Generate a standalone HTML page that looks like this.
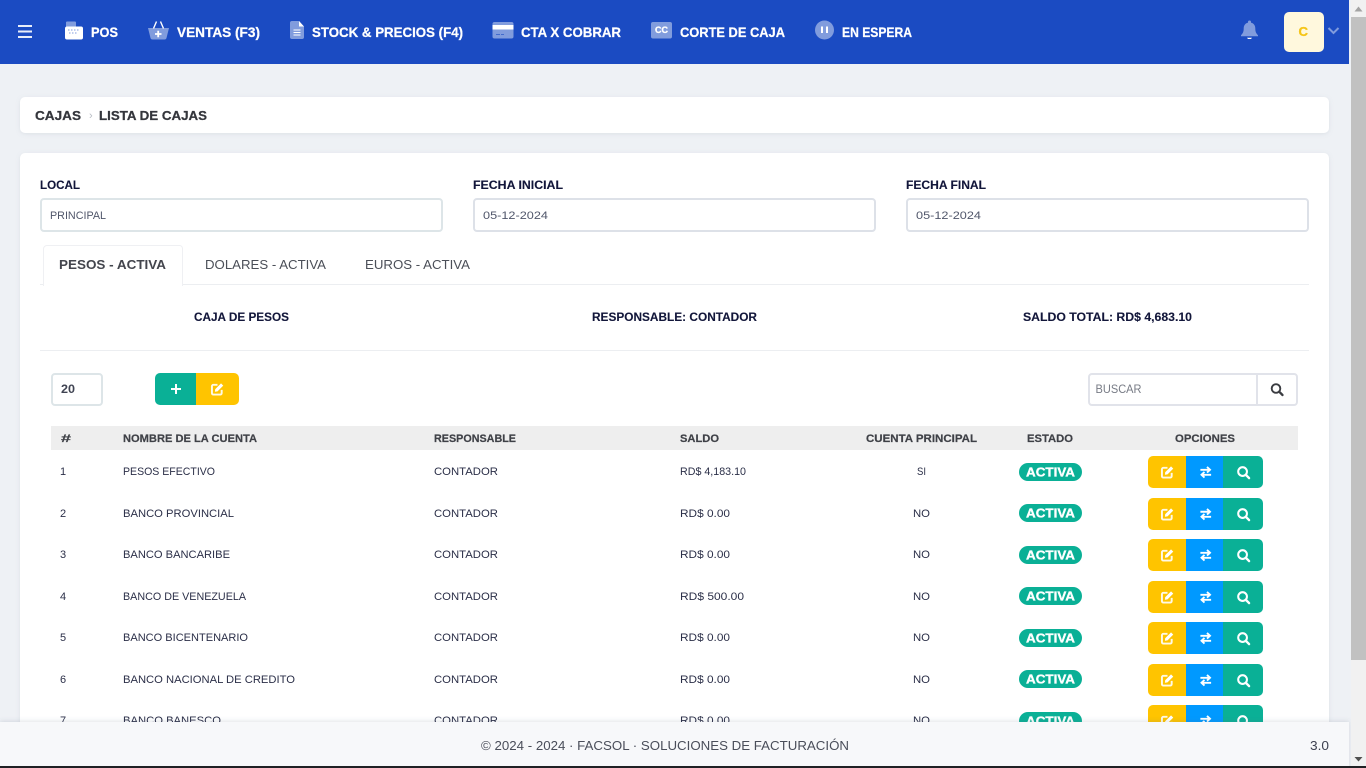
<!DOCTYPE html>
<html lang="es">
<head>
<meta charset="utf-8">
<title>Lista de cajas</title>
<style>
html,body{margin:0;padding:0;width:1366px;height:768px;overflow:hidden;background:#eef1f5}
svg{display:block;position:absolute;left:0;top:0}
text{font-family:"Liberation Sans",sans-serif}
.nav{font-size:14px;font-weight:700;fill:#fff;stroke:#fff;stroke-width:.25px}
.lab{font-size:12px;font-weight:700;fill:#12163a;stroke:#12163a;stroke-width:.12px}
.val{font-size:11px;fill:#50566a}
.tab{font-size:13px;fill:#4b4f58}
.sum{font-size:12px;font-weight:700;fill:#12163a;stroke:#12163a;stroke-width:.12px}
.th{font-size:11px;font-weight:700;fill:#3f4147;stroke:#3f4147;stroke-width:.2px}
.td{font-size:11px;fill:#2b2f48}
.bd{font-size:12.5px;font-weight:700;fill:#fff;stroke:#fff;stroke-width:.35px}
</style>
</head>
<body>
<svg width="1366" height="768" viewBox="0 0 1366 768" xmlns="http://www.w3.org/2000/svg">
<defs>
<filter id="sh" x="-2%" y="-20%" width="104%" height="140%"><feDropShadow dx="0" dy="1" stdDeviation="2" flood-color="#8a94a6" flood-opacity=".18"/></filter>
<filter id="fs" x="-2%" y="-30%" width="104%" height="140%"><feDropShadow dx="0" dy="-1" stdDeviation="2" flood-color="#5a6478" flood-opacity=".18"/></filter>
<symbol id="ed" viewBox="0 0 14 14" overflow="visible">
<path d="M11.500 8v3.400a1.600 1.600 0 0 1-1.600 1.600H2.600A1.600 1.600 0 0 1 1 11.400V4.100a1.600 1.600 0 0 1 1.600-1.600h4.400" fill="none" stroke="#fff" stroke-width="2.100" stroke-opacity=".9"/>
<path d="M4.600 7.200 10.800.9l2.400 2.400L7 9.500l-2.800.4z" fill="#fff"/>
</symbol>
<symbol id="ex" viewBox="0 0 14 14" overflow="visible">
<path d="M1 4.200h10M8.400 1l3.400 3.200-3.400 3.200M13 9.800H3M5.600 6.600 2.200 9.800 5.600 13" fill="none" stroke="#fff" stroke-width="2.100"/>
</symbol>
<symbol id="se" viewBox="0 0 14 14" overflow="visible">
<circle cx="6" cy="6" r="4.700" fill="none" stroke="#fff" stroke-width="2.200"/>
<path d="M9.500 9.500l3.500 3.500" stroke="#fff" stroke-width="2.600" stroke-linecap="round"/>
</symbol>
<g id="btns">
<path d="M5 0h33v32H5a5 5 0 0 1-5-5V5a5 5 0 0 1 5-5z" fill="#ffc400"/>
<rect x="38" width="37" height="32" fill="#0099ff"/>
<path d="M75 0h35a5 5 0 0 1 5 5v22a5 5 0 0 1-5 5H75z" fill="#0ab096"/>
<use href="#ed" x="13" y="9.500" width="13" height="13"/>
<use href="#ex" x="51.500" y="10" width="12.500" height="12.500"/>
<use href="#se" x="89" y="10" width="13" height="13"/>
</g>
</defs>

<rect width="1366" height="768" fill="#eef1f5"/>

<!-- Breadcrumb card -->
<rect x="20" y="97" width="1309" height="36" rx="5" fill="#fff" filter="url(#sh)"/>
<text x="35" y="120" font-size="13" font-weight="700" fill="#34363c" stroke="#34363c" stroke-width=".25" textLength="46" lengthAdjust="spacingAndGlyphs">CAJAS</text>
<text x="89" y="119" font-size="11" fill="#b8bcc4">›</text>
<text x="99" y="120" font-size="13" font-weight="700" fill="#34363c" stroke="#34363c" stroke-width=".25" textLength="108" lengthAdjust="spacingAndGlyphs">LISTA DE CAJAS</text>

<!-- Main card -->
<rect x="20" y="153" width="1309" height="640" rx="5" fill="#fff" filter="url(#sh)"/>

<text class="lab" x="40" y="189" textLength="40" lengthAdjust="spacingAndGlyphs">LOCAL</text>
<text class="lab" x="473" y="189" textLength="90" lengthAdjust="spacingAndGlyphs">FECHA INICIAL</text>
<text class="lab" x="906" y="189" textLength="80" lengthAdjust="spacingAndGlyphs">FECHA FINAL</text>

<rect x="41" y="199" width="401" height="32" rx="3" fill="#fff" stroke="#dde5e8" stroke-width="2"/>
<rect x="474" y="199" width="401" height="32" rx="3" fill="#fff" stroke="#dde1e8" stroke-width="2"/>
<rect x="907" y="199" width="401" height="32" rx="3" fill="#fff" stroke="#dde1e8" stroke-width="2"/>
<text class="val" x="50" y="219" textLength="56" lengthAdjust="spacingAndGlyphs">PRINCIPAL</text>
<text class="val" x="483" y="219" textLength="65" lengthAdjust="spacingAndGlyphs">05-12-2024</text>
<text class="val" x="916" y="219" textLength="65" lengthAdjust="spacingAndGlyphs">05-12-2024</text>

<!-- Tabs -->
<path d="M40 284.500H1309" stroke="#eceef1" stroke-width="1"/>
<path d="M43.500 286V249a3.500 3.500 0 0 1 3.500-3.500h132.500a3 3 0 0 1 3 3V286" fill="#fff" stroke="#eff0f3" stroke-width="1"/>
<text class="tab" x="59" y="269" font-weight="700" style="fill:#43454d" textLength="107" lengthAdjust="spacingAndGlyphs">PESOS - ACTIVA</text>
<text class="tab" x="205" y="269" textLength="121" lengthAdjust="spacingAndGlyphs">DOLARES - ACTIVA</text>
<text class="tab" x="365" y="269" textLength="105" lengthAdjust="spacingAndGlyphs">EUROS - ACTIVA</text>

<!-- Summary -->
<text class="sum" x="194" y="321" textLength="95" lengthAdjust="spacingAndGlyphs">CAJA DE PESOS</text>
<text class="sum" x="592" y="321" textLength="165" lengthAdjust="spacingAndGlyphs">RESPONSABLE: CONTADOR</text>
<text class="sum" x="1023" y="321" textLength="169" lengthAdjust="spacingAndGlyphs">SALDO TOTAL: RD$ 4,683.10</text>
<path d="M40 350.500H1309" stroke="#eceef1" stroke-width="1"/>

<!-- Controls -->
<rect x="52" y="374" width="50" height="31" rx="3" fill="#fff" stroke="#dde5e8" stroke-width="2"/>
<text x="61" y="393" font-size="11.500" font-weight="700" fill="#3f4352" textLength="14" lengthAdjust="spacingAndGlyphs">20</text>
<path d="M160 373h36v32h-36a5 5 0 0 1-5-5v-22a5 5 0 0 1 5-5z" fill="#0ab096"/>
<path d="M196 373h38a5 5 0 0 1 5 5v22a5 5 0 0 1-5 5h-38z" fill="#ffc400"/>
<path d="M171 389h10M176 384v10" stroke="#fff" stroke-width="2"/>
<use href="#ed" x="211" y="382.500" width="13" height="13"/>

<rect x="1089" y="374" width="208" height="31" rx="3" fill="#fff" stroke="#e1e3ea" stroke-width="2"/>
<path d="M1257 374v31" stroke="#e1e3ea" stroke-width="2"/>
<text x="1095.500" y="393" font-size="11.500" fill="#777b85" textLength="46" lengthAdjust="spacingAndGlyphs">BUSCAR</text>
<g>
<circle cx="1276" cy="388.500" r="4.300" fill="none" stroke="#3b3d42" stroke-width="1.900"/>
<path d="M1279.200 391.700l3.300 3.300" stroke="#3b3d42" stroke-width="2.300" stroke-linecap="round"/>
</g>

<!-- Table header -->
<rect x="51" y="426" width="1247" height="24" fill="#eeeeee"/>
<text class="th" x="61" y="442" textLength="10" lengthAdjust="spacingAndGlyphs">#</text>
<text class="th" x="123" y="442" textLength="134" lengthAdjust="spacingAndGlyphs">NOMBRE DE LA CUENTA</text>
<text class="th" x="434" y="442" textLength="82" lengthAdjust="spacingAndGlyphs">RESPONSABLE</text>
<text class="th" x="680" y="442" textLength="39" lengthAdjust="spacingAndGlyphs">SALDO</text>
<text class="th" x="866" y="442" textLength="111" lengthAdjust="spacingAndGlyphs">CUENTA PRINCIPAL</text>
<text class="th" x="1027" y="442" textLength="46" lengthAdjust="spacingAndGlyphs">ESTADO</text>
<text class="th" x="1175" y="442" textLength="60" lengthAdjust="spacingAndGlyphs">OPCIONES</text>

<!-- Row 1 -->
<text class="td" x="60" y="475">1</text>
<text class="td" x="123" y="475" textLength="92" lengthAdjust="spacingAndGlyphs">PESOS EFECTIVO</text>
<text class="td" x="434" y="475" textLength="64" lengthAdjust="spacingAndGlyphs">CONTADOR</text>
<text class="td" x="680" y="475" textLength="66" lengthAdjust="spacingAndGlyphs">RD$ 4,183.10</text>
<text class="td" x="917" y="475" textLength="9" lengthAdjust="spacingAndGlyphs">SI</text>
<rect x="1019" y="463" width="63" height="18" rx="9" fill="#0ab096"/>
<text class="bd" x="1026" y="476.500" textLength="49" lengthAdjust="spacingAndGlyphs">ACTIVA</text>
<use href="#btns" x="1148" y="456"/>

<!-- Row 2 -->
<text class="td" x="60" y="517">2</text>
<text class="td" x="123" y="517" textLength="111" lengthAdjust="spacingAndGlyphs">BANCO PROVINCIAL</text>
<text class="td" x="434" y="517" textLength="64" lengthAdjust="spacingAndGlyphs">CONTADOR</text>
<text class="td" x="680" y="517" textLength="50" lengthAdjust="spacingAndGlyphs">RD$ 0.00</text>
<text class="td" x="913" y="517" textLength="17" lengthAdjust="spacingAndGlyphs">NO</text>
<rect x="1019" y="504" width="63" height="18" rx="9" fill="#0ab096"/>
<text class="bd" x="1026" y="517.500" textLength="49" lengthAdjust="spacingAndGlyphs">ACTIVA</text>
<use href="#btns" x="1148" y="498"/>

<!-- Row 3 -->
<text class="td" x="60" y="558">3</text>
<text class="td" x="123" y="558" textLength="107" lengthAdjust="spacingAndGlyphs">BANCO BANCARIBE</text>
<text class="td" x="434" y="558" textLength="64" lengthAdjust="spacingAndGlyphs">CONTADOR</text>
<text class="td" x="680" y="558" textLength="50" lengthAdjust="spacingAndGlyphs">RD$ 0.00</text>
<text class="td" x="913" y="558" textLength="17" lengthAdjust="spacingAndGlyphs">NO</text>
<rect x="1019" y="546" width="63" height="18" rx="9" fill="#0ab096"/>
<text class="bd" x="1026" y="559.500" textLength="49" lengthAdjust="spacingAndGlyphs">ACTIVA</text>
<use href="#btns" x="1148" y="539"/>

<!-- Row 4 -->
<text class="td" x="60" y="600">4</text>
<text class="td" x="123" y="600" textLength="123" lengthAdjust="spacingAndGlyphs">BANCO DE VENEZUELA</text>
<text class="td" x="434" y="600" textLength="64" lengthAdjust="spacingAndGlyphs">CONTADOR</text>
<text class="td" x="680" y="600" textLength="64" lengthAdjust="spacingAndGlyphs">RD$ 500.00</text>
<text class="td" x="913" y="600" textLength="17" lengthAdjust="spacingAndGlyphs">NO</text>
<rect x="1019" y="587" width="63" height="18" rx="9" fill="#0ab096"/>
<text class="bd" x="1026" y="600.500" textLength="49" lengthAdjust="spacingAndGlyphs">ACTIVA</text>
<use href="#btns" x="1148" y="581"/>

<!-- Row 5 -->
<text class="td" x="60" y="641">5</text>
<text class="td" x="123" y="641" textLength="125" lengthAdjust="spacingAndGlyphs">BANCO BICENTENARIO</text>
<text class="td" x="434" y="641" textLength="64" lengthAdjust="spacingAndGlyphs">CONTADOR</text>
<text class="td" x="680" y="641" textLength="50" lengthAdjust="spacingAndGlyphs">RD$ 0.00</text>
<text class="td" x="913" y="641" textLength="17" lengthAdjust="spacingAndGlyphs">NO</text>
<rect x="1019" y="629" width="63" height="18" rx="9" fill="#0ab096"/>
<text class="bd" x="1026" y="642.500" textLength="49" lengthAdjust="spacingAndGlyphs">ACTIVA</text>
<use href="#btns" x="1148" y="622"/>

<!-- Row 6 -->
<text class="td" x="60" y="683">6</text>
<text class="td" x="123" y="683" textLength="172" lengthAdjust="spacingAndGlyphs">BANCO NACIONAL DE CREDITO</text>
<text class="td" x="434" y="683" textLength="64" lengthAdjust="spacingAndGlyphs">CONTADOR</text>
<text class="td" x="680" y="683" textLength="50" lengthAdjust="spacingAndGlyphs">RD$ 0.00</text>
<text class="td" x="913" y="683" textLength="17" lengthAdjust="spacingAndGlyphs">NO</text>
<rect x="1019" y="670" width="63" height="18" rx="9" fill="#0ab096"/>
<text class="bd" x="1026" y="683.500" textLength="49" lengthAdjust="spacingAndGlyphs">ACTIVA</text>
<use href="#btns" x="1148" y="664"/>

<!-- Row 7 (clipped by footer) -->
<text class="td" x="60" y="724">7</text>
<text class="td" x="123" y="724" textLength="98" lengthAdjust="spacingAndGlyphs">BANCO BANESCO</text>
<text class="td" x="434" y="724" textLength="64" lengthAdjust="spacingAndGlyphs">CONTADOR</text>
<text class="td" x="680" y="724" textLength="50" lengthAdjust="spacingAndGlyphs">RD$ 0.00</text>
<text class="td" x="913" y="724" textLength="17" lengthAdjust="spacingAndGlyphs">NO</text>
<rect x="1019" y="712" width="63" height="18" rx="9" fill="#0ab096"/>
<text class="bd" x="1026" y="725.500" textLength="49" lengthAdjust="spacingAndGlyphs">ACTIVA</text>
<use href="#btns" x="1148" y="705"/>

<!-- Footer -->
<rect x="0" y="722" width="1349" height="46" fill="#f7f8fa" filter="url(#fs)"/>
<text x="481" y="750" font-size="13" fill="#4a4e5a" textLength="368" lengthAdjust="spacingAndGlyphs">© 2024 - 2024 · FACSOL · SOLUCIONES DE FACTURACIÓN</text>
<text x="1310" y="750" font-size="13" fill="#3d4150" textLength="19" lengthAdjust="spacingAndGlyphs">3.0</text>

<!-- Header -->
<rect x="0" y="0" width="1349" height="64" fill="#1b4bc2"/>
<path d="M18 26h14M18 31.500h14M18 37h14" stroke="#fff" stroke-width="2" stroke-opacity=".9"/>

<!-- POS -->
<rect x="66" y="21.500" width="10" height="6" rx="1" fill="#fff" fill-opacity=".45"/>
<rect x="65" y="26.500" width="18" height="13" rx="2" fill="#fff"/>
<path d="M68 30h1.500M71 30h1.500M74 30h1.500M77 30h1.500M69 33h1.500M72 33h1.500M75 33h1.500" stroke="#1b4bc2" stroke-opacity=".55" stroke-width="1"/>
<text class="nav" x="91" y="37" textLength="27" lengthAdjust="spacingAndGlyphs">POS</text>

<!-- VENTAS -->
<path d="M148 28h21l-2.500 10a2 2 0 0 1-2 1.500h-12a2 2 0 0 1-2-1.500z" fill="#fff" fill-opacity=".45"/>
<path d="M156.500 21.500l-3 7M160.500 21.500l3 7" stroke="#fff" stroke-width="1.400"/>
<path d="M155 34h6.500M158.200 30.700v6.600" stroke="#fff" stroke-width="1.800"/>
<text class="nav" x="177" y="37" textLength="83" lengthAdjust="spacingAndGlyphs">VENTAS (F3)</text>

<!-- STOCK -->
<path d="M292 21h7l5 5.500V37a2 2 0 0 1-2 2h-10a2 2 0 0 1-2-2V23a2 2 0 0 1 2-2z" fill="#fff" fill-opacity=".45"/>
<path d="M299 21l5 5.500h-5z" fill="#fff"/>
<path d="M293.500 30h7M293.500 32.500h7M293.500 35h7" stroke="#fff" stroke-width="1.100"/>
<text class="nav" x="312" y="37" textLength="151" lengthAdjust="spacingAndGlyphs">STOCK &amp; PRECIOS (F4)</text>

<!-- CTA -->
<rect x="492.500" y="22" width="21" height="16.500" rx="2" fill="#fff" fill-opacity=".45"/>
<rect x="492.500" y="25" width="21" height="4.500" fill="#fff"/>
<path d="M496 34.500h4M501 34.500h3" stroke="#1b4bc2" stroke-opacity=".6" stroke-width="1"/>
<text class="nav" x="521" y="37" textLength="100" lengthAdjust="spacingAndGlyphs">CTA X COBRAR</text>

<!-- CC -->
<rect x="651" y="22" width="21" height="16.500" rx="2" fill="#fff" fill-opacity=".45"/>
<text x="655" y="33" font-size="9" font-weight="700" fill="#fff" stroke="#fff" stroke-width=".3" textLength="13" lengthAdjust="spacingAndGlyphs">CC</text>
<text class="nav" x="680" y="37" textLength="105" lengthAdjust="spacingAndGlyphs">CORTE DE CAJA</text>

<!-- EN ESPERA -->
<circle cx="824.500" cy="30" r="9.500" fill="#fff" fill-opacity=".45"/>
<path d="M822 26.500v6.500M827 26.500v6.500" stroke="#fff" stroke-width="2"/>
<text class="nav" x="842" y="37" textLength="70" lengthAdjust="spacingAndGlyphs">EN ESPERA</text>

<!-- Bell -->
<path d="M1249.500 20.500a1.500 1.500 0 0 1 1.500 1.500v.6c2.800.7 4.300 3 4.300 5.800 0 3.500.8 4.800 2.700 6.800v1h-17v-1c1.900-2 2.700-3.300 2.700-6.800 0-2.800 1.500-5.100 4.300-5.800V22a1.500 1.500 0 0 1 1.500-1.500z" fill="#fff" fill-opacity=".45"/>
<path d="M1247 37.800h5l-1 1.200h-3z" fill="#fff"/>

<!-- Avatar -->
<rect x="1284" y="12" width="40" height="40" rx="5" fill="#fff8dd"/>
<text x="1298.500" y="36" font-size="13" font-weight="700" fill="#f5c518" stroke="#f5c518" stroke-width=".3" textLength="9.500" lengthAdjust="spacingAndGlyphs">C</text>
<path d="M1328.500 28l5 5 5-5" fill="none" stroke="#fff" stroke-opacity=".45" stroke-width="2"/>

<!-- Scrollbar -->
<rect x="1351" y="0" width="15" height="768" fill="#f1f1f1"/>
<rect x="1351" y="17" width="15" height="643" fill="#c1c1c1"/>
<path d="M1358.500 6.500l4 5h-8z" fill="#a3a3a3"/>
<path d="M1358.500 761.500l4-4.500h-8z" fill="#505050"/>

<!-- Bottom edge -->
<rect x="0" y="766" width="1366" height="2" fill="#202124"/>
</svg>
</body>
</html>
